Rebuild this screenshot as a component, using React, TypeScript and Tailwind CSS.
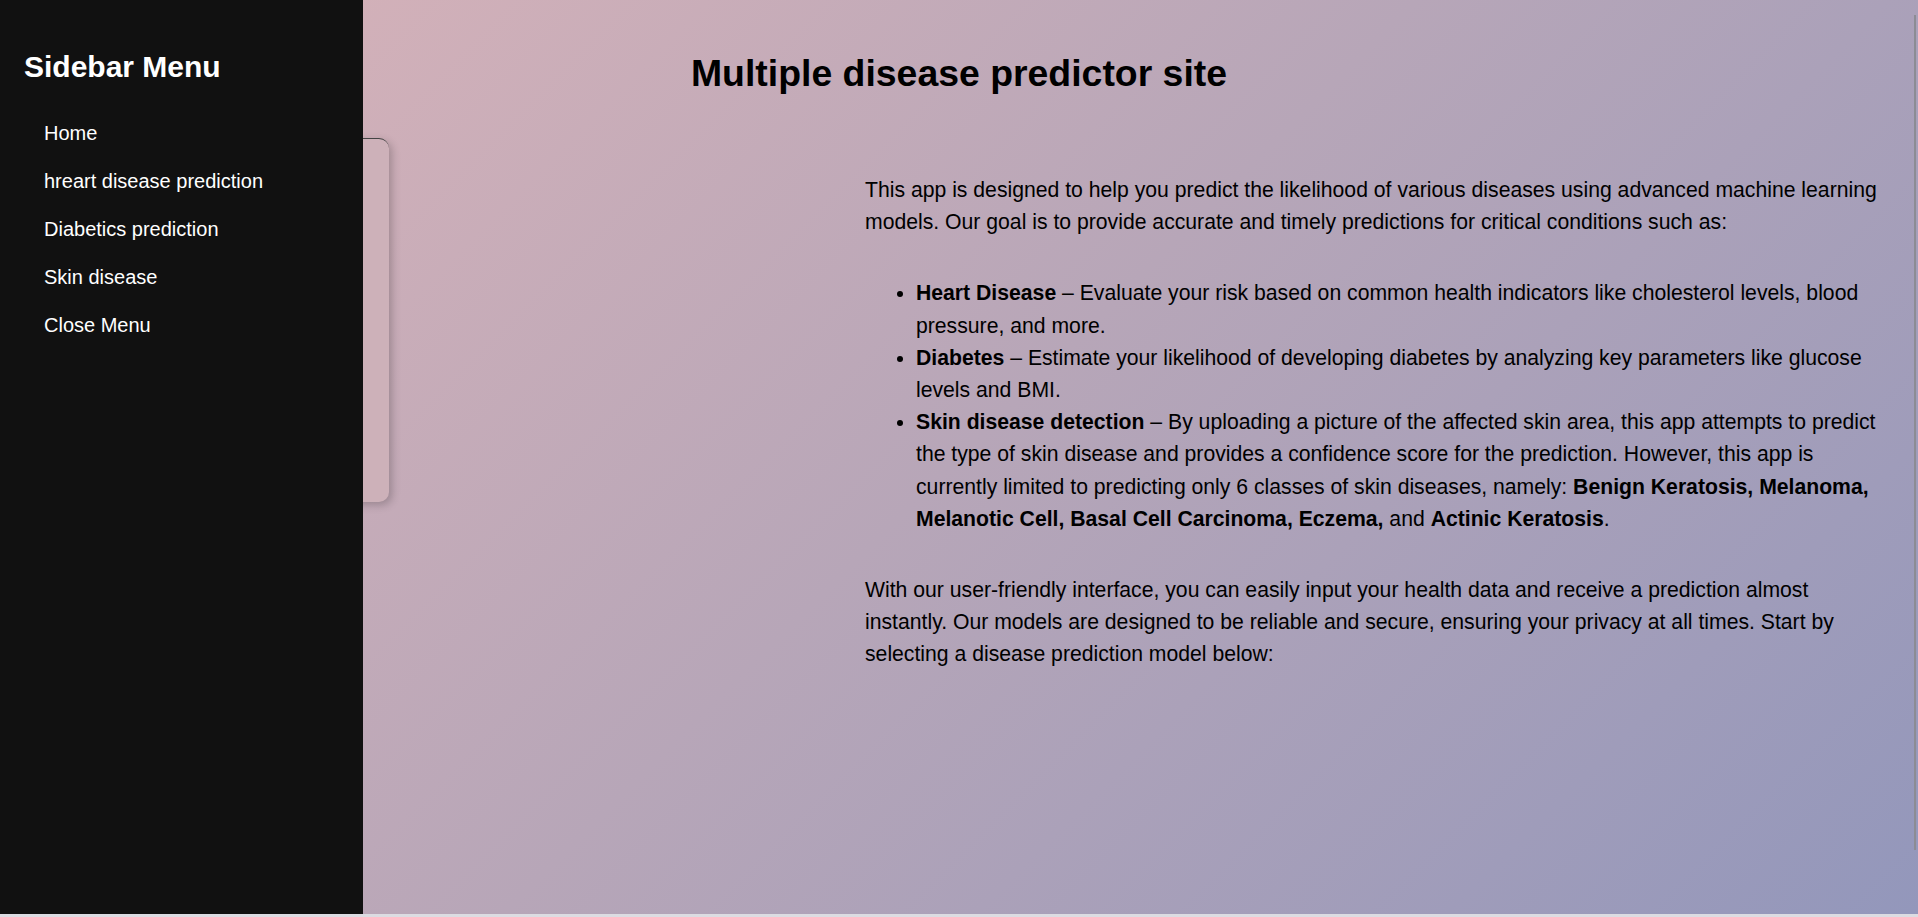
import React from "react";

const navItems = [
  "Home",
  "hreart disease prediction",
  "Diabetics prediction",
  "Skin disease",
  "Close Menu",
];

function Sidebar() {
  return (
    <aside className="absolute left-0 top-0 h-[914px] w-[363px] bg-[#111111] pl-[24px] pt-[49px] text-white">
      <h2 className="text-[30px] font-bold leading-[36px]">Sidebar Menu</h2>
      <ul className="mt-[24px] pl-[20px]">
        {navItems.map((item) => (
          <li key={item} className="text-[20px] leading-[48px]">
            {item}
          </li>
        ))}
      </ul>
    </aside>
  );
}

export default function App() {
  return (
    <div className="font-['Liberation_Sans',Arial,sans-serif] text-black">
      {/* START: PAGE */}
      <main className="relative h-[914px] w-full overflow-hidden bg-[linear-gradient(135deg,#dbb4b9_0%,#b7a6b8_50%,#9397bb_100%)] pt-[51px]">
        <h1 className="text-center text-[37.4px] font-bold leading-[44px]">
          Multiple disease predictor site
        </h1>

        {/* START: CONTENT ROW */}
        <div className="mt-[43px] flex">
          {/* card, mostly under the sidebar */}
          <div className="ml-[40px] h-[364px] w-[349px] shrink-0 rounded-[10px] border-t border-[#444444] bg-[#cdb1b9] shadow-[3px_3px_8px_rgba(0,0,0,0.22)]" />

          {/* intro text */}
          <div className="ml-[476px] mt-[36px] w-[1025px] shrink-0 text-[21.2px] leading-[32.2px]">
            <p>
              This app is designed to help you predict the likelihood of various diseases using advanced
              machine learning models. Our goal is to provide accurate and timely predictions for critical
              conditions such as:
            </p>
            <ul className="mt-[39px] list-disc pl-[51px]">
              <li>
                <b>Heart Disease</b> – Evaluate your risk based on common health indicators like cholesterol
                levels, blood pressure, and more.
              </li>
              <li>
                <b>Diabetes</b> – Estimate your likelihood of developing diabetes by analyzing key parameters
                like glucose levels and BMI.
              </li>
              <li>
                <b>Skin disease detection</b> – By uploading a picture of the affected skin area, this app
                attempts to predict the type of skin disease and provides a confidence score for the
                prediction. However, this app is currently limited to predicting only 6 classes of skin
                diseases, namely:{" "}
                <b>Benign Keratosis, Melanoma, Melanotic Cell, Basal Cell Carcinoma, Eczema,</b> and{" "}
                <b>Actinic Keratosis</b>.
              </li>
            </ul>
            <p className="mt-[39px]">
              With our user-friendly interface, you can easily input your health data and receive a
              prediction almost instantly. Our models are designed to be reliable and secure, ensuring your
              privacy at all times. Start by selecting a disease prediction model below:
            </p>
          </div>
        </div>
        {/* END: CONTENT ROW */}

        <Sidebar />

        {/* thin scroll thumb on the right */}
        <div className="absolute right-[2px] top-[15px] h-[835px] w-[2px] bg-[#8c8c94]" />
      </main>
      <div className="h-[3px] w-full bg-[#dcdce2]" />
      {/* END: PAGE */}
    </div>
  );
}
